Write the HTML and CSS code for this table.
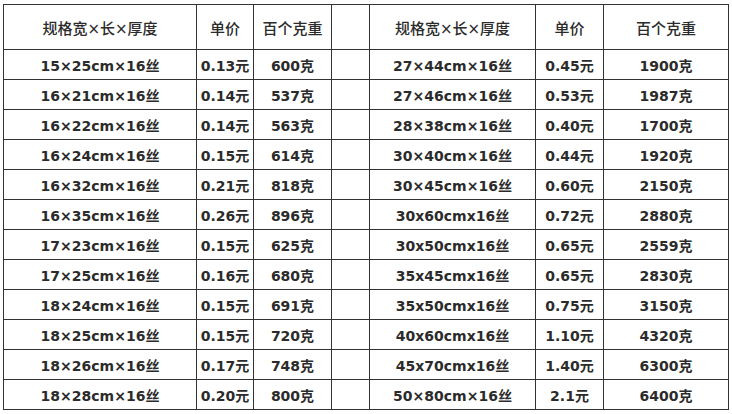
FILE: index.html
```html
<!DOCTYPE html>
<html lang="zh-CN">
<head>
<meta charset="utf-8">
<title>规格表</title>
<link rel="stylesheet" href="styles.css">
</head>
<body>
<table class="spec">
  <colgroup>
    <col class="c-size"><col class="c-price"><col class="c-weight"><col class="c-gap">
    <col class="c-size2"><col class="c-price2"><col class="c-weight2">
  </colgroup>
  <thead>
    <tr class="head">
      <th>规格宽×长×厚度</th><th>单价</th><th>百个克重</th><th></th>
      <th>规格宽×长×厚度</th><th>单价</th><th>百个克重</th>
    </tr>
  </thead>
  <tbody>
    <tr><td>15×25cm×16丝</td><td>0.13元</td><td>600克</td><td></td><td>27×44cm×16丝</td><td>0.45元</td><td>1900克</td></tr>
    <tr><td>16×21cm×16丝</td><td>0.14元</td><td>537克</td><td></td><td>27×46cm×16丝</td><td>0.53元</td><td>1987克</td></tr>
    <tr><td>16×22cm×16丝</td><td>0.14元</td><td>563克</td><td></td><td>28×38cm×16丝</td><td>0.40元</td><td>1700克</td></tr>
    <tr><td>16×24cm×16丝</td><td>0.15元</td><td>614克</td><td></td><td>30×40cm×16丝</td><td>0.44元</td><td>1920克</td></tr>
    <tr><td>16×32cm×16丝</td><td>0.21元</td><td>818克</td><td></td><td>30×45cm×16丝</td><td>0.60元</td><td>2150克</td></tr>
    <tr><td>16×35cm×16丝</td><td>0.26元</td><td>896克</td><td></td><td>30x60cmx16丝</td><td>0.72元</td><td>2880克</td></tr>
    <tr><td>17×23cm×16丝</td><td>0.15元</td><td>625克</td><td></td><td>30x50cmx16丝</td><td>0.65元</td><td>2559克</td></tr>
    <tr><td>17×25cm×16丝</td><td>0.16元</td><td>680克</td><td></td><td>35x45cmx16丝</td><td>0.65元</td><td>2830克</td></tr>
    <tr><td>18×24cm×16丝</td><td>0.15元</td><td>691克</td><td></td><td>35x50cmx16丝</td><td>0.75元</td><td>3150克</td></tr>
    <tr><td>18×25cm×16丝</td><td>0.15元</td><td>720克</td><td></td><td>40x60cmx16丝</td><td>1.10元</td><td>4320克</td></tr>
    <tr><td>18×26cm×16丝</td><td>0.17元</td><td>748克</td><td></td><td>45x70cmx16丝</td><td>1.40元</td><td>6300克</td></tr>
    <tr><td>18×28cm×16丝</td><td>0.20元</td><td>800克</td><td></td><td>50×80cm×16丝</td><td>2.1元</td><td>6400克</td></tr>
  </tbody>
</table>
</body>
</html>
```
FILE: styles.css
```css
html, body {
  margin: 0;
  padding: 0;
  background: #ffffff;
}
body {
  padding: 4px 0 0 3px;
  font-family: "DejaVu Sans", "Noto Sans CJK SC", sans-serif;
  color: #2b2b2b;
}
.spec {
  border-collapse: collapse;
  table-layout: fixed;
  width: 726px;
}
.spec th,
.spec td {
  border: 1px solid #333333;
  padding: 0;
  text-align: center;
  vertical-align: middle;
  white-space: nowrap;
  overflow: hidden;
}
.spec th {
  height: 44px;
  font-size: 15px;
  font-weight: 500;
}
.spec td {
  height: 29px;
  font-size: 14px;
  font-weight: bold;
}
.c-size { width: 193px; }
.c-price { width: 57px; }
.c-weight { width: 78px; }
.c-gap { width: 38px; }
.c-size2 { width: 166px; }
.c-price2 { width: 68px; }
.c-weight2 { width: 125px; }
```
